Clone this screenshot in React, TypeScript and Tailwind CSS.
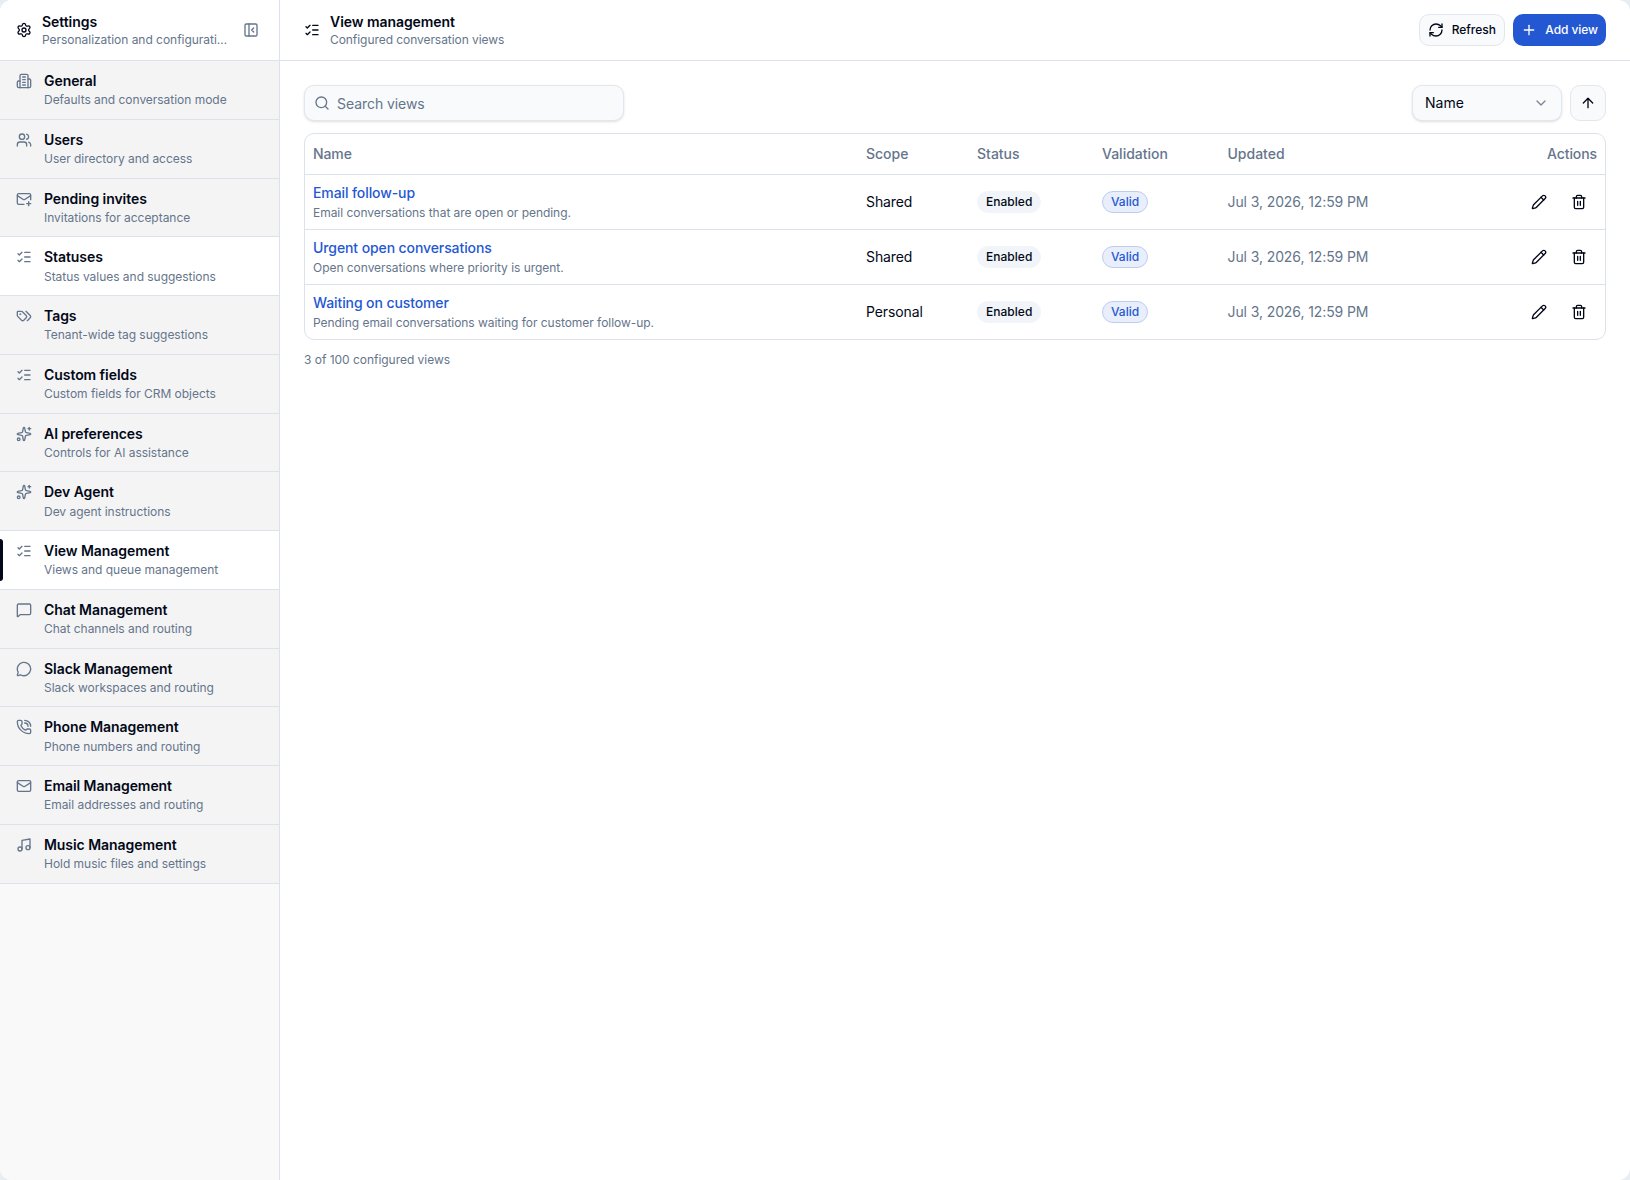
import {
  ArrowUp,
  ChevronDown,
  ListChecks,
  Mail,
  MailPlus,
  MessageCircle,
  MessageSquare,
  Music,
  PanelLeftClose,
  Pencil,
  PhoneCall,
  Plus,
  RefreshCw,
  Search,
  Settings,
  Sparkles,
  Users,
} from 'lucide-react'
import clsx from 'clsx'
import type { ComponentType, ReactNode } from 'react'

type IconProps = { className?: string }

type NavItem = {
  label: string
  description: string
  icon: ComponentType<IconProps>
  state?: 'active' | 'hover'
}

function StrokeIcon({ className, children }: IconProps & { children: ReactNode }) {
  return (
    <svg
      className={className}
      viewBox="0 0 24 24"
      fill="none"
      stroke="currentColor"
      strokeWidth="2"
      strokeLinecap="round"
      strokeLinejoin="round"
    >
      {children}
    </svg>
  )
}

function BuildingIcon({ className }: IconProps) {
  return (
    <StrokeIcon className={className}>
      <path d="M6 22V4a2 2 0 0 1 2-2h8a2 2 0 0 1 2 2v18Z" />
      <path d="M6 12H4a2 2 0 0 0-2 2v6a2 2 0 0 0 2 2h2" />
      <path d="M18 9h2a2 2 0 0 1 2 2v9a2 2 0 0 1-2 2h-2" />
      <path d="M10 6h4M10 10h4M10 14h4M10 18h4" />
    </StrokeIcon>
  )
}

function TagsIcon({ className }: IconProps) {
  return (
    <StrokeIcon className={className}>
      <path d="m15 5 6.3 6.3a2.4 2.4 0 0 1 0 3.4L17 19" />
      <path d="M9.586 5.586A2 2 0 0 0 8.172 5H3a1 1 0 0 0-1 1v5.172a2 2 0 0 0 .586 1.414L8.29 18.29a2.426 2.426 0 0 0 3.42 0l3.58-3.58a2.426 2.426 0 0 0 0-3.42z" />
      <circle cx="6.5" cy="9.5" r=".5" fill="currentColor" />
    </StrokeIcon>
  )
}

function TrashIcon({ className }: IconProps) {
  return (
    <StrokeIcon className={className}>
      <path d="M3 6h18" />
      <path d="M19 6v14a2 2 0 0 1-2 2H7a2 2 0 0 1-2-2V6" />
      <path d="M8 6V4a2 2 0 0 1 2-2h4a2 2 0 0 1 2 2v2" />
      <path d="M10 11v6M14 11v6" />
    </StrokeIcon>
  )
}

const navItems: NavItem[] = [
  { label: 'General', description: 'Defaults and conversation mode', icon: BuildingIcon },
  { label: 'Users', description: 'User directory and access', icon: Users },
  { label: 'Pending invites', description: 'Invitations for acceptance', icon: MailPlus },
  { label: 'Statuses', description: 'Status values and suggestions', icon: ListChecks, state: 'hover' },
  { label: 'Tags', description: 'Tenant-wide tag suggestions', icon: TagsIcon },
  { label: 'Custom fields', description: 'Custom fields for CRM objects', icon: ListChecks },
  { label: 'AI preferences', description: 'Controls for AI assistance', icon: Sparkles },
  { label: 'Dev Agent', description: 'Dev agent instructions', icon: Sparkles },
  { label: 'View Management', description: 'Views and queue management', icon: ListChecks, state: 'active' },
  { label: 'Chat Management', description: 'Chat channels and routing', icon: MessageSquare },
  { label: 'Slack Management', description: 'Slack workspaces and routing', icon: MessageCircle },
  { label: 'Phone Management', description: 'Phone numbers and routing', icon: PhoneCall },
  { label: 'Email Management', description: 'Email addresses and routing', icon: Mail },
  { label: 'Music Management', description: 'Hold music files and settings', icon: Music },
]

const views = [
  {
    name: 'Email follow-up',
    description: 'Email conversations that are open or pending.',
    scope: 'Shared',
    updated: 'Jul 3, 2026, 12:59 PM',
  },
  {
    name: 'Urgent open conversations',
    description: 'Open conversations where priority is urgent.',
    scope: 'Shared',
    updated: 'Jul 3, 2026, 12:59 PM',
  },
  {
    name: 'Waiting on customer',
    description: 'Pending email conversations waiting for customer follow-up.',
    scope: 'Personal',
    updated: 'Jul 3, 2026, 12:59 PM',
  },
]

function Sidebar() {
  return (
    <aside className="flex w-[280px] shrink-0 flex-col border-r border-[#dce2ea] bg-[#f9f9f9]">
      <div className="flex h-[61px] shrink-0 items-center border-b border-[#dce2ea] bg-white pr-5 pl-4">
        <Settings className="size-4 shrink-0" />
        <div className="ml-2.5 min-w-0 flex-1">
          <h2 className="text-sm leading-5 font-semibold tracking-[-0.06px]">Settings</h2>
          <p className="text-xs leading-4 tracking-[-0.03px] text-[#65758b]">
            Personalization and configurati…
          </p>
        </div>
        <button className="text-[#65758b]">
          <PanelLeftClose className="size-4" />
        </button>
      </div>
      <nav>
        {navItems.map((item) => (
          <a
            key={item.label}
            className={clsx(
              'relative flex gap-3 border-b border-[#dce2ea] py-2.5 pr-4 pl-4',
              item.state ? 'bg-white' : 'bg-[#f4f4f5]',
            )}
          >
            {item.state === 'active' && (
              <span className="absolute top-2 bottom-2 left-0 w-[3px] rounded-r-sm bg-[#020817]" />
            )}
            <item.icon className="mt-0.5 size-4 shrink-0 text-[#65758b]" />
            <span className="flex flex-col gap-0.5">
              <span className="text-sm leading-snug font-semibold tracking-[-0.06px]">{item.label}</span>
              <span className="text-xs leading-snug tracking-[-0.03px] text-[#65758b]">{item.description}</span>
            </span>
          </a>
        ))}
      </nav>
    </aside>
  )
}

function PageHeader() {
  return (
    <header className="flex h-[61px] shrink-0 items-center border-b border-[#dce2ea] px-6">
      <ListChecks className="size-4 shrink-0" />
      <div className="ml-2.5 flex-1">
        <h1 className="text-sm leading-5 font-semibold tracking-[-0.06px]">View management</h1>
        <p className="text-xs leading-4 tracking-[-0.06px] text-[#65758b]">Configured conversation views</p>
      </div>
      <div className="flex gap-2">
        <button className="flex h-8 w-[86px] items-center justify-between rounded-[10px] border border-[#e1e7ef] bg-[#f8fafc] px-2 text-xs font-medium">
          <RefreshCw className="size-4" />
          Refresh
        </button>
        <button className="flex h-8 w-[93px] items-center justify-between rounded-[10px] bg-[#2458d3] px-2 text-xs font-medium tracking-[-0.06px] text-white">
          <Plus className="size-4" />
          Add view
        </button>
      </div>
    </header>
  )
}

function Toolbar() {
  return (
    <div className="flex items-center gap-2">
      <div className="flex h-9 w-80 items-center gap-[7px] rounded-[10px] border border-[#e1e7ef] bg-[#f8fafc] px-[9px] text-sm tracking-[-0.06px] text-[#65758b] shadow-sm">
        <Search className="size-4" />
        <span className="pt-px">Search views</span>
      </div>
      <button className="ml-auto flex h-9 w-[150px] items-center justify-between rounded-[10px] border border-[#e1e7ef] bg-[#f8fafc] px-3 text-sm shadow-sm">
        Name
        <ChevronDown className="size-4 text-[#808591]" />
      </button>
      <button className="flex size-9 items-center justify-center rounded-[10px] border border-[#e1e7ef] bg-[#f8fafc]">
        <ArrowUp className="size-4" />
      </button>
    </div>
  )
}

function ViewsTable() {
  return (
    <div className="mt-3 overflow-hidden rounded-[10px] border border-[#dce2ea]">
      <table className="w-full table-fixed border-separate border-spacing-0 text-sm tracking-[-0.1px]">
        <colgroup>
          <col className="w-[553px]" />
          <col className="w-[111px]" />
          <col className="w-[125px]" />
          <col className="w-[125.5px]" />
          <col />
          <col className="w-[120px]" />
        </colgroup>
        <thead>
          <tr className="h-[41px] text-left tracking-normal text-[#65758b] *:border-b *:border-[#dce2ea]">
            <th className="px-2 font-medium tracking-[-0.1px]">Name</th>
            <th className="px-2 font-medium">Scope</th>
            <th className="px-2 font-medium">Status</th>
            <th className="px-2 font-medium">Validation</th>
            <th className="px-2 font-medium">Updated</th>
            <th className="px-2 text-right font-medium tracking-[-0.1px]">Actions</th>
          </tr>
        </thead>
        <tbody>
          {views.map((view) => (
            <tr
              key={view.name}
              className="h-[55px] *:border-b *:border-[#dce2ea] last:h-[54px] last:*:border-b-0"
            >
              <td className="px-2">
                <p className="leading-5 font-medium text-[#2458d3]">{view.name}</p>
                <p className="mt-0.5 text-xs leading-4 tracking-[-0.04px] text-[#65758b]">{view.description}</p>
              </td>
              <td className="px-2">{view.scope}</td>
              <td className="px-2">
                <span className="flex h-[22px] w-fit items-center rounded-full border border-[#f1f5f9] bg-[#f1f5f9] px-2 text-xs font-medium tracking-[0.03px]">
                  Enabled
                </span>
              </td>
              <td className="px-2">
                <span className="flex h-[22px] w-fit items-center rounded-full border border-[#bdcdf2] bg-[#e9eefb] px-2 text-xs font-medium tracking-normal text-[#2458d3]">
                  Valid
                </span>
              </td>
              <td className="px-2 text-[#65758b]">{view.updated}</td>
              <td className="px-2">
                <div className="flex justify-end gap-2 pr-0.5">
                  <button className="flex size-8 items-center justify-center">
                    <Pencil className="size-4" />
                  </button>
                  <button className="flex size-8 items-center justify-center">
                    <TrashIcon className="size-4" />
                  </button>
                </div>
              </td>
            </tr>
          ))}
        </tbody>
      </table>
    </div>
  )
}

export default function App() {
  return (
    <div className="h-screen bg-[#e8edf3] font-[Inter,'Liberation_Sans',sans-serif] text-[#020817]">
      <div className="flex h-full overflow-hidden rounded-xl bg-white">
        <Sidebar />
        <main className="flex min-w-0 flex-1 flex-col">
          <PageHeader />
          <section className="px-6 py-6">
            <Toolbar />
            <ViewsTable />
            <p className="mt-3 text-xs leading-4 tracking-[-0.03px] text-[#65758b]">3 of 100 configured views</p>
          </section>
        </main>
      </div>
    </div>
  )
}
